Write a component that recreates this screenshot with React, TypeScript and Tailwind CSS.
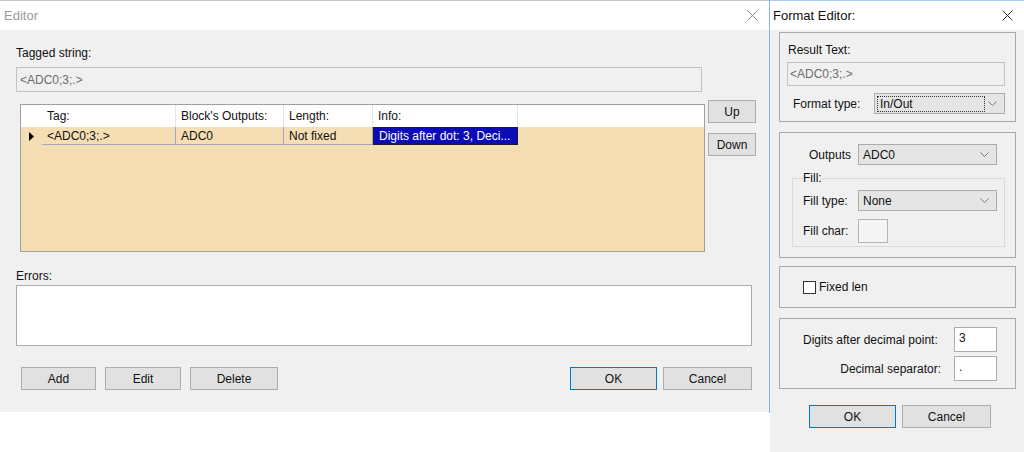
import React from 'react';

const CloseIcon = ({ color }: { color: string }) => (
  <svg width="11" height="11" viewBox="0 0 11 11" fill="none">
    <path d="M0.5 0.5 L10.5 10.5 M10.5 0.5 L0.5 10.5" stroke={color} strokeWidth="1" />
  </svg>
);

const Chevron = () => (
  <svg width="9" height="5" viewBox="0 0 9 5" fill="none">
    <path d="M0.5 0.5 L4.5 4.5 L8.5 0.5" stroke="#7a7a7a" strokeWidth="1" />
  </svg>
);

const Button = ({
  label,
  width,
  primary = false,
}: {
  label: string;
  width: string;
  primary?: boolean;
}) => (
  <div
    className={`flex h-[23px] shrink-0 items-center justify-center border bg-[#e1e1e1] ${width} ${
      primary ? 'border-[#0078d7]' : 'border-[#adadad]'
    }`}
  >
    {label}
  </div>
);

const Select = ({
  value,
  width,
  focused = false,
}: {
  value: string;
  width: string;
  focused?: boolean;
}) => (
  <div
    className={`flex h-[21px] items-center justify-between border border-[#acacac] bg-[#e5e5e5] pr-[7px] ${width}`}
  >
    {focused ? (
      <div className="ml-[2px] flex h-[16px] w-[108px] items-center border border-dotted border-[#333] pl-[2px]">
        {value}
      </div>
    ) : (
      <span className="pl-[4px]">{value}</span>
    )}
    <Chevron />
  </div>
);

const EditorWindow = () => (
  <div className="flex w-[769px] flex-col">
    <div className="flex h-[30px] items-center justify-between border-t border-[#c4c4c4] bg-white pl-[4px] pr-[11px]">
      <span className="text-[13px] text-[#9a9a9a]">Editor</span>
      <CloseIcon color="#8a8a8a" />
    </div>

    <div className="flex h-[382px] flex-col bg-[#f0f0f0] px-[16px] pt-[16px]">
      <div>Tagged string:</div>
      <div className="mt-[7px] flex h-[25px] w-[686px] items-center border border-[#c3c3c3] pl-[3px] text-[#6d6d6d]">
        &lt;ADC0;3;.&gt;
      </div>

      <div className="mt-[8px] flex">
        <div className="ml-[4px] mt-[4px] flex h-[148px] w-[685px] shrink-0 flex-col border border-[#a0a0a0] bg-[#f5deb3]">
          <div className="flex h-[22px] bg-white">
            <div className="w-[21px]" />
            <div className="flex w-[134px] items-center border-r border-[#e6e6e6] pl-[5px]">Tag:</div>
            <div className="flex w-[108px] items-center border-r border-[#e6e6e6] pl-[5px]">
              Block&apos;s Outputs:
            </div>
            <div className="flex w-[89px] items-center border-r border-[#e6e6e6] pl-[5px]">Length:</div>
            <div className="flex w-[145px] items-center border-r border-[#e6e6e6] pl-[5px]">Info:</div>
          </div>
          <div className="flex h-[18px]">
            <div className="flex w-[21px] items-center pl-[8px]">
              <svg width="5" height="9" viewBox="0 0 5 9">
                <path d="M0 0 L5 4.5 L0 9 Z" fill="#000" />
              </svg>
            </div>
            <div className="flex w-[134px] items-center border-b border-r border-[#a4a4c6] pl-[5px]">
              &lt;ADC0;3;.&gt;
            </div>
            <div className="flex w-[108px] items-center border-b border-r border-[#a4a4c6] pl-[5px]">ADC0</div>
            <div className="flex w-[89px] items-center border-b border-r border-[#a4a4c6] pl-[5px]">
              Not fixed
            </div>
            <div className="flex w-[145px] items-center border border-[#1a1a3a] bg-[#0c0cb6] pl-[5px] text-white">
              Digits after dot: 3, Deci...
            </div>
          </div>
        </div>

        <div className="ml-[3px] flex shrink-0 flex-col gap-[10px]">
          <Button label="Up" width="w-[48px]" />
          <Button label="Down" width="w-[48px]" />
        </div>
      </div>

      <div className="mt-[17px]">Errors:</div>
      <div className="mt-[2px] h-[61px] w-[736px] border border-[#acacac] bg-white" />

      <div className="mt-[21px] flex w-[736px] pl-[5px]">
        <div className="flex gap-[9px]">
          <Button label="Add" width="w-[75px]" />
          <Button label="Edit" width="w-[76px]" />
          <Button label="Delete" width="w-[88px]" />
        </div>
        <div className="flex-1" />
        <div className="flex gap-[6px]">
          <Button label="OK" width="w-[87px]" primary />
          <Button label="Cancel" width="w-[89px]" />
        </div>
      </div>
    </div>

    <div className="flex-1 bg-white" />
  </div>
);

const FormatEditorWindow = () => (
  <div className="flex flex-1 flex-col bg-[#f0f0f0]">
    <div className="flex h-[30px] items-center justify-between border-t border-[#a9cbee] bg-white pl-[3px] pr-[11px]">
      <span className="text-[13px]">Format Editor:</span>
      <CloseIcon color="#333" />
    </div>

    <div className="flex flex-col pl-[9px] pr-[8px] pt-[2px]">
      {/* Result text + format type */}
      <div className="h-[90px] border border-[#a9a9a9] pl-[7px] pt-[10px]">
        <div className="ml-[1px]">Result Text:</div>
        <div className="mt-[5px] flex h-[24px] w-[218px] items-center border border-[#c3c3c3] pl-[2px] text-[#6d6d6d]">
          &lt;ADC0;3;.&gt;
        </div>
        <div className="mt-[7px] flex items-center">
          <span className="ml-[6px] w-[81px]">Format type:</span>
          <Select value="In/Out" width="w-[131px]" focused />
        </div>
      </div>

      {/* Outputs + fill */}
      <div className="mt-[10px] h-[126px] border border-[#a9a9a9] pl-[12px] pt-[11px]">
        <div className="flex items-center">
          <span className="ml-[17px] w-[49px]">Outputs</span>
          <Select value="ADC0" width="w-[139px]" />
        </div>
        <fieldset className="mt-[6px] w-[213px] border border-[#dadada] pb-[3px] pl-[10px]">
          <legend className="leading-[14px]">Fill:</legend>
          <div className="mt-[5px] flex items-center">
            <span className="w-[55px]">Fill type:</span>
            <Select value="None" width="w-[139px]" />
          </div>
          <div className="mt-[8px] flex items-center">
            <span className="w-[55px]">Fill char:</span>
            <div className="h-[24px] w-[30px] border border-[#b4b4b4] bg-[#f5f5f5]" />
          </div>
        </fieldset>
      </div>

      {/* Fixed length */}
      <div className="mt-[8px] flex h-[42px] items-center border border-[#a9a9a9] pl-[23px]">
        <div className="h-[13px] w-[13px] border border-[#333] bg-white" />
        <span className="ml-[3px]">Fixed len</span>
      </div>

      {/* Decimals */}
      <div className="mt-[10px] flex h-[71px] flex-col gap-[4px] border border-[#a9a9a9] pl-[23px] pt-[8px]">
        <div className="flex">
          <span className="flex w-[151px] items-center">Digits after decimal point:</span>
          <div className="h-[25px] w-[43px] border border-[#acacac] bg-white pl-[4px] pt-[3px]">3</div>
        </div>
        <div className="flex">
          <span className="flex w-[151px] items-center justify-end pr-[13px]">Decimal separator:</span>
          <div className="h-[25px] w-[43px] border border-[#acacac] bg-white pl-[4px] pt-[3px]">.</div>
        </div>
      </div>

      <div className="ml-[30px] mt-[16px] flex gap-[6px]">
        <Button label="OK" width="w-[87px]" primary />
        <Button label="Cancel" width="w-[89px]" />
      </div>
    </div>
  </div>
);

export default function App() {
  return (
    <div className="flex h-[452px] w-[1024px] overflow-hidden bg-white font-['Liberation_Sans',Arial,sans-serif] text-[12px] leading-[14px] text-[#111]">
      <EditorWindow />
      <div className="h-[413px] w-px bg-[#86b3e3]" />
      <FormatEditorWindow />
    </div>
  );
}
